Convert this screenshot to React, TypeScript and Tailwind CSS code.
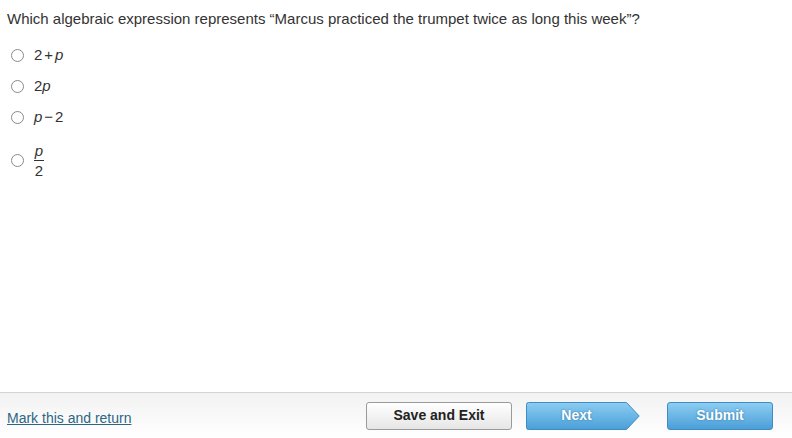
import React from "react";

const options = [
  { key: "a", label: <><span>2</span><span className="mx-[2px]">+</span><i>p</i></> },
  { key: "b", label: <><span>2</span><i>p</i></> },
  { key: "c", label: <><i>p</i><span className="mx-[2px]">−</span><span>2</span></> },
  {
    key: "d",
    label: (
      <span className="inline-flex flex-col items-center leading-none">
        <i className="pb-[2px]">p</i>
        <span className="w-[10px] border-t border-[#333]" />
        <span className="pt-[2px]">2</span>
      </span>
    ),
  },
];

function Radio() {
  return <span className="inline-block h-[13px] w-[13px] rounded-full border border-[#8a8a8a] bg-white" />;
}

export default function App() {
  return (
    <div className="flex h-[438px] w-[792px] flex-col bg-white font-['Liberation_Sans',Arial,sans-serif] text-[#333]">
      <div className="flex-1">
        <p className="pl-[7px] pt-[10px] text-[15px] leading-[18px]">
          Which algebraic expression represents “Marcus practiced the trumpet twice as long this week”?
        </p>
        <ul className="mt-[12px] flex flex-col">
          {options.map((o, i) => (
            <li
              key={o.key}
              className={
                "flex items-center gap-[10px] pl-[11px] text-[15px] " +
                (i === 3 ? "h-[40px] mt-[7px]" : "h-[31px]")
              }
            >
              <Radio />
              <span className="inline-flex items-center">{o.label}</span>
            </li>
          ))}
        </ul>
      </div>

      <div className="flex h-[46px] items-center border-t border-[#d4d4d4] bg-gradient-to-b from-[#f2f2f2] to-white pl-[7px] pr-[19px]">
        <a href="#" className="mt-[5px] text-[14px] text-[#2b6685] underline">
          Mark this and return
        </a>
        <div className="ml-auto flex items-center">
          <button className="h-[28px] w-[146px] rounded-[3px] border border-[#9a9a9a] bg-gradient-to-b from-white to-[#e6e6e6] text-[14px] font-bold text-[#222]">
            Save and Exit
          </button>
          <button className="relative ml-[14px] h-[28px] w-[114px] text-[14px] font-bold text-white [text-shadow:0_0_2px_#2a6f9e]">
            <svg className="absolute inset-0" width="114" height="28" viewBox="0 0 114 28">
              <defs>
                <linearGradient id="nx" x1="0" y1="0" x2="0" y2="1">
                  <stop offset="0" stopColor="#8ccdf2" />
                  <stop offset="1" stopColor="#4a9fd8" />
                </linearGradient>
              </defs>
              <path d="M2.5 0.5 H100.5 L113.2 14 L100.5 27.5 H2.5 Q0.5 27.5 0.5 25.5 V2.5 Q0.5 0.5 2.5 0.5 Z" fill="url(#nx)" stroke="#3f8cc4" />
            </svg>
            <span className="relative pr-[13px]">Next</span>
          </button>
          <button className="ml-[27px] h-[28px] w-[106px] rounded-[3px] border border-[#3f8cc4] bg-gradient-to-b from-[#8ccdf2] to-[#4a9fd8] text-[14px] font-bold text-white [text-shadow:0_0_2px_#2a6f9e]">
            Submit
          </button>
        </div>
      </div>
    </div>
  );
}
